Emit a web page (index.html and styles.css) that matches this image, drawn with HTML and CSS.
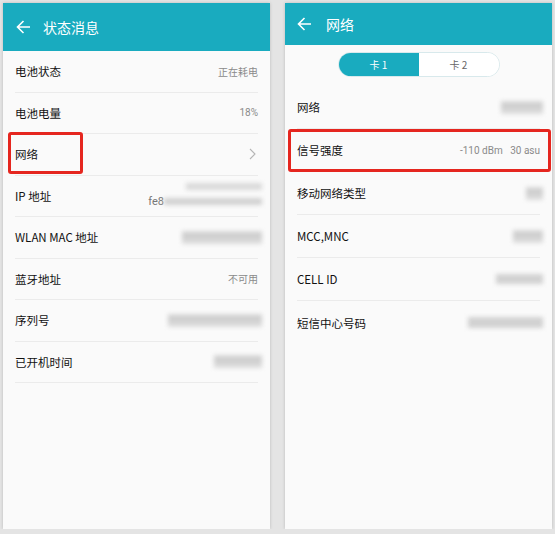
FILE: index.html
```html
<!DOCTYPE html>
<html lang="zh-CN">
<head>
    <meta charset="UTF-8">
    <meta name="viewport" content="width=device-width, initial-scale=1.0">
    <title>状态消息 / 网络</title>
    <link rel="stylesheet" href="styles.css">
</head>
<body>
    <div class="screens">
        <!-- Status screen -->
        <section class="phone">
            <header class="appbar appbar-tall">
                <svg class="back" width="15" height="14" viewBox="0 0 15 14"><path d="M14 7H1.5M7.5 1L1.5 7l6 6" fill="none" stroke="#fff" stroke-width="1.6"/></svg>
                <h1>状态消息</h1>
            </header>
            <ul class="list list-status">
                <li class="row"><span class="label">电池状态</span><span class="value">正在耗电</span></li>
                <li class="row"><span class="label">电池电量</span><span class="value">18%</span></li>
                <li class="row">
                    <span class="label">网络</span>
                    <svg class="chevron" width="7" height="12" viewBox="0 0 7 12"><path d="M1 1l5 5-5 5" fill="none" stroke="#b5b5b5" stroke-width="1.1"/></svg>
                    <span class="mark mark-left"></span>
                </li>
                <li class="row">
                    <span class="label">IP 地址</span>
                    <span class="value stack">
                        <span class="blur blur-light w-ip"></span>
                        <span class="ip6">fe8<span class="blur w-ip6"></span></span>
                    </span>
                </li>
                <li class="row"><span class="label">WLAN MAC 地址</span><span class="blur tall w-mac"></span></li>
                <li class="row"><span class="label">蓝牙地址</span><span class="value">不可用</span></li>
                <li class="row"><span class="label">序列号</span><span class="blur tall w-serial"></span></li>
                <li class="row"><span class="label">已开机时间</span><span class="blur tall w-uptime"></span></li>
            </ul>
        </section>

        <!-- Network screen -->
        <section class="phone">
            <header class="appbar">
                <svg class="back" width="15" height="14" viewBox="0 0 15 14"><path d="M14 7H1.5M7.5 1L1.5 7l6 6" fill="none" stroke="#fff" stroke-width="1.6"/></svg>
                <h1>网络</h1>
            </header>
            <div class="tabs">
                <span class="tab active">卡 1</span>
                <span class="tab">卡 2</span>
            </div>
            <ul class="list list-net">
                <li class="row"><span class="label">网络</span><span class="blur tall w-net"></span></li>
                <li class="row">
                    <span class="label">信号强度</span>
                    <span class="value">-110 dBm&nbsp;&nbsp;&nbsp;30 asu</span>
                    <span class="mark mark-right"></span>
                </li>
                <li class="row"><span class="label">移动网络类型</span><span class="blur tall w-type"></span></li>
                <li class="row"><span class="label">MCC,MNC</span><span class="blur tall w-mcc"></span></li>
                <li class="row"><span class="label">CELL ID</span><span class="blur w-cell"></span></li>
                <li class="row"><span class="label">短信中心号码</span><span class="blur w-sms"></span></li>
            </ul>
        </section>
    </div>
</body>
</html>
```

FILE: styles.css
```css
:root {
    --teal: #19abbf;
    --panel: #fafafa;
    --line: #ebebeb;
    --mark: #e5261f;
}

* {
    margin: 0;
    padding: 0;
    box-sizing: border-box;
}

body {
    background: #e4e4e4;
    font-family: "Noto Sans CJK SC", "Noto Sans", sans-serif;
    color: #111;
}

.screens {
    display: flex;
    gap: 15px;
    padding: 3px 3px 0 3px;
}

.phone {
    width: 267px;
    height: 526px;
    background: var(--panel);
    box-shadow: 0 0 3px rgba(0, 0, 0, 0.18);
}

.appbar {
    height: 42px;
    background: var(--teal);
    display: flex;
    align-items: center;
    padding: 0 12px;
    gap: 14px;
    color: #fff;
}

.appbar-tall {
    height: 48px;
    padding-left: 13px;
}

.appbar-tall h1 {
    margin-left: -2px;
}

.appbar h1 {
    font-size: 14px;
    font-weight: 400;
}

.back {
    flex-shrink: 0;
}

.tabs {
    display: flex;
    width: 162px;
    height: 25px;
    margin: 7px auto 9px;
    border: 1px solid #d8e9ec;
    border-radius: 13px;
    overflow: hidden;
}

.tab {
    flex: 1;
    display: flex;
    align-items: center;
    justify-content: center;
    font-size: 10px;
    color: #666;
    background: #fff;
}

.tab.active {
    background: var(--teal);
    color: #fff;
}

.list {
    list-style: none;
}

.row {
    position: relative;
    display: flex;
    align-items: center;
    justify-content: space-between;
    margin: 0 12px;
    border-bottom: 1px solid var(--line);
    font-size: 11.5px;
}

.list-status .row {
    height: 41.5px;
}

.list-net .row {
    height: 43px;
}

.list-net .row:last-child {
    border-bottom: none;
}

.label {
    white-space: nowrap;
}

.value {
    font-size: 10px;
    color: #8a8a8a;
    font-family: Roboto, "Noto Sans CJK SC", sans-serif;
}

.stack {
    display: flex;
    flex-direction: column;
    align-items: flex-end;
    gap: 5px;
    margin-right: -4px;
}

.ip6 {
    display: flex;
    align-items: center;
    font-size: 11px;
    color: #777;
}

.chevron {
    margin-right: 2px;
}

/* blurred (hidden) values */
.blur {
    display: inline-block;
    height: 7px;
    background: #d2d2d2;
    filter: blur(2px);
}

.blur.tall {
    height: 13px;
    background: linear-gradient(#dadada, #cbcbcb 40%, #d6d6d6 60%, #dddddd);
}

.blur-light {
    background: #dadada;
}

.w-ip { width: 76px; }
.w-ip6 { width: 98px; }
.w-mac { width: 80px; margin-right: -4px; }
.w-serial { width: 94px; margin-right: -4px; }
.w-uptime { width: 48px; margin-right: -4px; }
.w-net { width: 42px; margin-right: -3px; }
.w-type { width: 17px; margin-right: -3px; }
.w-mcc { width: 30px; margin-right: -3px; }
.w-cell { width: 47px; height: 10px; margin-right: -3px; }
.w-sms { width: 75px; height: 11px; margin-right: -3px; }

/* red highlight boxes */
.mark {
    position: absolute;
    border: 3px solid var(--mark);
    border-radius: 3px;
    pointer-events: none;
}

.mark-left {
    left: -7px;
    top: -2px;
    width: 75px;
    height: 42px;
}

.mark-right {
    left: -9px;
    right: -11px;
    top: 0;
    bottom: -1px;
}
```
